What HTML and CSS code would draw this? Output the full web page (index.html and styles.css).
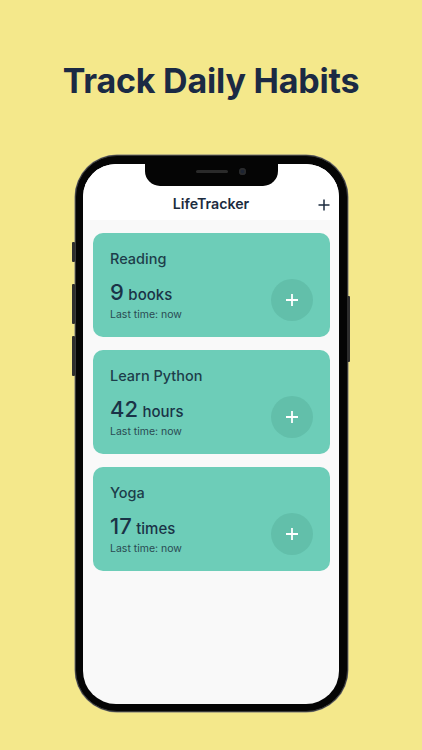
FILE: index.html
```html
<!DOCTYPE html>
<html>
<head>
<meta charset="utf-8">
<link rel="stylesheet" href="styles.css">
</head>
<body>
<div class="page">
  <h1 class="headline">Track Daily Habits</h1>
  <div class="phone">
    <span class="btn btn-mute"></span>
    <span class="btn btn-vol1"></span>
    <span class="btn btn-vol2"></span>
    <span class="btn btn-power"></span>
    <div class="screen">
      <div class="appbar">
        <span class="apptitle">LifeTracker</span>
        <span class="addtop">
          <svg width="12" height="12" viewBox="0 0 12 12"><path d="M6 0.5V11.5M0.5 6H11.5" stroke="#1c2b3e" stroke-width="1.5" fill="none"/></svg>
        </span>
      </div>
      <div class="list">
        <div class="card">
          <div class="info">
            <div class="name">Reading</div>
            <div class="count"><span class="num">9</span> <span class="unit">books</span></div>
            <div class="last">Last time: now</div>
          </div>
          <div class="plus"><svg width="14" height="14" viewBox="0 0 14 14"><path d="M7 1V13M1 7H13" stroke="#ffffff" stroke-width="1.8" fill="none"/></svg></div>
        </div>
        <div class="card">
          <div class="info">
            <div class="name">Learn Python</div>
            <div class="count"><span class="num">42</span> <span class="unit">hours</span></div>
            <div class="last">Last time: now</div>
          </div>
          <div class="plus"><svg width="14" height="14" viewBox="0 0 14 14"><path d="M7 1V13M1 7H13" stroke="#ffffff" stroke-width="1.8" fill="none"/></svg></div>
        </div>
        <div class="card">
          <div class="info">
            <div class="name">Yoga</div>
            <div class="count"><span class="num">17</span> <span class="unit">times</span></div>
            <div class="last">Last time: now</div>
          </div>
          <div class="plus"><svg width="14" height="14" viewBox="0 0 14 14"><path d="M7 1V13M1 7H13" stroke="#ffffff" stroke-width="1.8" fill="none"/></svg></div>
        </div>
      </div>
      <div class="notch"><span class="speaker"></span><span class="camera"></span></div>
    </div>
  </div>
</div>
</body>
</html>
```
FILE: styles.css
```css
* { box-sizing: border-box; }
html, body { margin: 0; padding: 0; }
body {
  background: #f4e88b;
  font-family: Inter, "Noto Sans", sans-serif;
  width: 422px;
  height: 750px;
  overflow: hidden;
}
.page {
  display: flex;
  flex-direction: column;
  align-items: center;
  padding-top: 59px;
}
.headline {
  margin: 0;
  font-size: 34px;
  line-height: 44px;
  font-weight: 700;
  color: #1b2a44;
  letter-spacing: -0.2px;
}
.phone {
  position: relative;
  margin-top: 52px;
  width: 273px;
  height: 557px;
  background: #050505;
  border: 1.5px solid #3a3a3a;
  border-radius: 42px;
  padding: 7.5px 7.5px;
  box-shadow: 0 0 0 0.5px #777;
}
.btn {
  position: absolute;
  background: #2d2d2d;
  width: 3px;
  border-radius: 1px;
}
.btn-mute { left: -3.5px; top: 86px; height: 20px; }
.btn-vol1 { left: -3.5px; top: 128px; height: 40px; }
.btn-vol2 { left: -3.5px; top: 180px; height: 40px; }
.btn-power { right: -3.5px; top: 140px; height: 66px; }
.screen {
  position: relative;
  width: 100%;
  height: 100%;
  background: #f9f9f9;
  border-radius: 33px;
  overflow: hidden;
}
.notch {
  position: absolute;
  z-index: 2;
  left: 62px;
  top: 0;
  width: 133px;
  height: 22px;
  background: #050505;
  border-radius: 0 0 15px 15px;
}
.speaker {
  position: absolute;
  left: 51px;
  top: 6px;
  width: 32px;
  height: 3px;
  border-radius: 2px;
  background: #2a2a2a;
}
.camera {
  position: absolute;
  left: 94px;
  top: 4px;
  width: 7px;
  height: 7px;
  border-radius: 50%;
  background: #1d2433;
  box-shadow: inset 0 0 0 1.5px #2b2b2b;
}
.appbar {
  position: relative;
  background: #ffffff;
  height: 56px;
  display: flex;
  align-items: flex-end;
  justify-content: center;
  padding-bottom: 6px;
}
.apptitle {
  font-size: 14.2px;
  line-height: 20px;
  font-weight: 600;
  color: #1c2b3e;
}
.addtop {
  position: absolute;
  right: 9px;
  bottom: 9px;
  width: 12px;
  height: 12px;
  display: flex;
}
.list {
  display: flex;
  flex-direction: column;
  gap: 13px;
  padding: 13px 9px 0 10px;
}
.card {
  height: 104px;
  background: #6dcdb8;
  border-radius: 10px;
  padding: 16px 17px 16px 17px;
  display: flex;
  justify-content: space-between;
  align-items: flex-end;
}
.info {
  align-self: stretch;
  display: flex;
  flex-direction: column;
}
.name {
  font-size: 14.5px;
  line-height: 20px;
  font-weight: 500;
  color: #1d3d4a;
}
.count {
  margin-top: 10px;
  line-height: 26px;
  color: #1a3347;
  white-space: nowrap;
}
.num {
  font-size: 22px;
  font-weight: 500;
}
.unit {
  font-size: 15px;
  font-weight: 500;
}
.last {
  font-size: 10.5px;
  line-height: 14px;
  color: #2a4a52;
}
.plus {
  width: 42px;
  height: 42px;
  border-radius: 50%;
  background: #62bfaa;
  display: flex;
  align-items: center;
  justify-content: center;
}
```
